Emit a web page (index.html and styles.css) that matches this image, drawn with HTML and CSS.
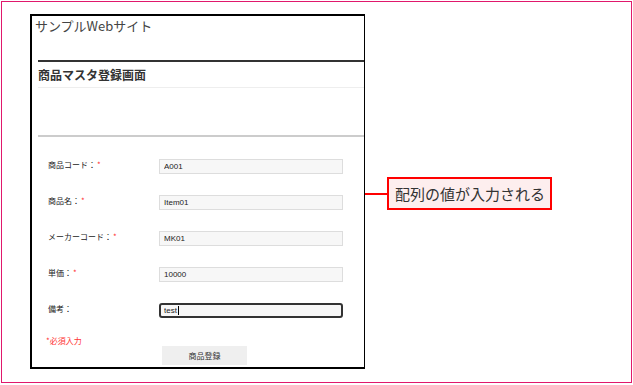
FILE: index.html
```html
<!DOCTYPE html>
<html lang="ja">
<head>
  <meta charset="UTF-8">
  <title>商品マスタ登録画面</title>
  <link rel="stylesheet" href="styles.css">
</head>
<body>
  <div class="sheet">
    <!-- Browser capture -->
    <div class="browser">
      <div class="site-title">サンプルWebサイト</div>
      <div class="page">
        <h2 class="page-title">商品マスタ登録画面</h2>
        <div class="form-area">
          <form class="item-form">
            <div class="row">
              <label for="itemCode">商品コード：<span class="req">*</span></label>
              <input type="text" id="itemCode" value="A001">
            </div>
            <div class="row">
              <label for="itemName">商品名：<span class="req">*</span></label>
              <input type="text" id="itemName" value="Item01">
            </div>
            <div class="row">
              <label for="makerCode">メーカーコード：<span class="req">*</span></label>
              <input type="text" id="makerCode" value="MK01">
            </div>
            <div class="row">
              <label for="price">単価：<span class="req">*</span></label>
              <input type="text" id="price" value="10000">
            </div>
            <div class="row">
              <label for="remarks">備考：</label>
              <span class="field">
                <input type="text" id="remarks" class="focused" value="test">
                <span class="caret"></span>
              </span>
            </div>
            <p class="note">*必須入力</p>
            <button type="button">商品登録</button>
          </form>
        </div>
      </div>
    </div>

    <!-- Annotation -->
    <div class="callout">
      <span class="callout-line"></span>
      <div class="callout-box">配列の値が入力される</div>
    </div>
  </div>
</body>
</html>
```

FILE: styles.css
```css
body {
  margin: 0;
  font-family: "Noto Sans CJK JP", sans-serif;
  background: #fff;
}
.sheet {
  margin: 1px 0 0 1px;
  width: 631px;
  height: 382px;
  box-sizing: border-box;
  border: 1px solid #e0186c;
  padding: 12px 0 0 28px;
  display: flex;
  align-items: flex-start;
}
.browser {
  width: 335px;
  height: 355px;
  box-sizing: border-box;
  border: 2px solid #000;
  border-right-width: 1px;
  overflow: hidden;
}
.site-title {
  height: 44px;
  box-sizing: border-box;
  padding: 1px 0 0 3px;
  font-size: 13px;
  line-height: 18px;
  color: #444;
}
.page {
  margin-left: 6px;
  border-top: 2px solid #333;
}
.page-title {
  margin: 0;
  height: 25px;
  line-height: 25px;
  font-size: 12px;
  font-weight: bold;
  color: #333;
  border-bottom: 1px solid #eee;
}
.form-area {
  margin-top: 47px;
  border-top: 2px solid #ccc;
  padding-top: 1px;
}
.row {
  display: flex;
  height: 15px;
  margin-top: 21px;
  padding-left: 10px;
}
.row label {
  width: 111px;
  font-size: 8px;
  line-height: 12px;
  color: #222;
}
.req {
  color: #f33;
  margin-left: 1px;
}
.row input {
  display: block;
  width: 184px;
  height: 15px;
  box-sizing: border-box;
  margin: 0;
  padding: 0 4px;
  border: 1px solid #ddd;
  background: #f7f7f7;
  font: 8px "Liberation Sans", sans-serif;
  color: #222;
  outline: none;
}
.field {
  position: relative;
  display: block;
}
.row input.focused {
  border: 2px solid #333;
  border-radius: 3px;
  padding: 0 3px;
}
.caret {
  position: absolute;
  left: 19px;
  top: 3px;
  width: 1px;
  height: 9px;
  background: #000;
}
.note {
  margin: 18px 0 0 8px;
  font-size: 8px;
  line-height: 10px;
  color: #f33;
}
.item-form button {
  display: block;
  margin-left: 124px;
  width: 85px;
  height: 19px;
  padding: 0;
  border: none;
  background: #efefef;
  font-family: "Noto Sans CJK JP", sans-serif;
  font-size: 8px;
  color: #333;
}
.callout {
  display: flex;
  align-items: center;
  margin-top: 163px;
}
.callout-line {
  width: 22px;
  height: 2px;
  background: #f00;
}
.callout-box {
  width: 165px;
  height: 33px;
  box-sizing: border-box;
  border: 2px solid #f00;
  background: #fdeeee;
  padding-left: 6px;
  font-size: 15px;
  line-height: 29px;
  color: #333;
}
```
